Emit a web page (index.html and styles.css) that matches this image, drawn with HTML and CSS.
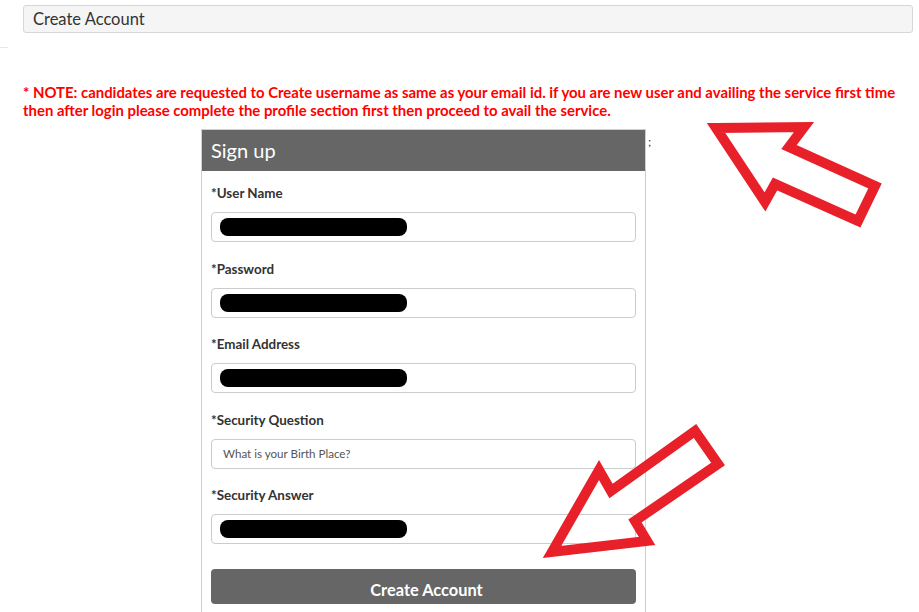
FILE: index.html
```html
<!DOCTYPE html>
<html lang="en">
<head>
<meta charset="utf-8">
<title>Create Account</title>
<link rel="stylesheet" href="styles.css">
</head>
<body>
<div class="page">
  <div class="titlebar">Create Account</div>
  <div class="rule"></div>
  <p class="note">* NOTE: candidates are requested to Create username as same as your email id. if you are new user and availing the service first time then after login please complete the profile section first then proceed to avail the service.</p>
  <div class="row">
    <div class="panel">
      <div class="panel-head">Sign up</div>
      <div class="panel-body">
        <div class="group">
          <div class="label">*User Name</div>
          <div class="input"><span class="redact"></span></div>
        </div>
        <div class="group">
          <div class="label">*Password</div>
          <div class="input"><span class="redact"></span></div>
        </div>
        <div class="group">
          <div class="label">*Email Address</div>
          <div class="input"><span class="redact"></span></div>
        </div>
        <div class="group">
          <div class="label">*Security Question</div>
          <div class="input select">What is your Birth Place?</div>
        </div>
        <div class="group last">
          <div class="label">*Security Answer</div>
          <div class="input"><span class="redact"></span></div>
        </div>
        <div class="button">Create Account</div>
      </div>
    </div>
    <span class="semi">;</span>
  </div>
  <svg class="annot" width="919" height="612" viewBox="0 0 919 612">
    <polygon points="716,128 804,127 789,147 875,186 858,221 775,184 765,202" fill="none" stroke="#e8202a" stroke-width="10" stroke-linejoin="miter" stroke-miterlimit="10"/>
    <polygon points="552,552 599,470 611,491 695,431 718,464 635,521 647,541" fill="none" stroke="#e8202a" stroke-width="10" stroke-linejoin="miter" stroke-miterlimit="10"/>
  </svg>
</div>
</body>
</html>
```
FILE: styles.css
```css
html, body {
  margin: 0;
  padding: 0;
  background: #fff;
}
.page {
  position: relative;
  width: 919px;
  height: 612px;
  overflow: hidden;
  font-family: Lato, "Liberation Sans", sans-serif;
  color: #333;
}
.titlebar {
  margin: 5px 6px 0 23px;
  height: 26px;
  line-height: 26px;
  padding-left: 9px;
  background: #f5f5f5;
  border: 1px solid #d6d6d6;
  border-radius: 3px;
  font-size: 16.5px;
  color: #333;
}
.rule {
  width: 8px;
  height: 1px;
  background: #e6e6e6;
  margin-top: 14px;
}
.note {
  margin: 35px 10px 0 23px;
  font-size: 14.9px;
  line-height: 18px;
  font-weight: bold;
  color: #ff0000;
}
.row {
  display: flex;
  align-items: flex-start;
  margin-top: 10px;
  margin-left: 201px;
}
.panel {
  width: 443px;
  border: 1px solid #cfcfcf;
  border-bottom: none;
  height: 490px;
}
.panel-head {
  height: 41px;
  line-height: 41px;
  background: #666;
  color: #fff;
  font-size: 20px;
  padding-left: 9px;
}
.panel-body {
  padding: 13px 8px 0 9px;
}
.group {
  margin-bottom: 17.5px;
}
.group.last {
  margin-bottom: 25px;
}
.label {
  font-size: 13.4px;
  font-weight: bold;
  line-height: 18px;
  margin-bottom: 10px;
  color: #333;
}
.input {
  box-sizing: border-box;
  height: 30px;
  width: 425px;
  border: 1px solid #ccc;
  border-radius: 4px;
  padding: 5px 0 0 8px;
  background: #fff;
}
.redact {
  display: block;
  width: 187px;
  height: 18px;
  background: #000;
  border-radius: 8px;
}
.input.select {
  padding: 0 0 0 11px;
  line-height: 28px;
  font-size: 11.6px;
  color: #555;
}
.button {
  box-sizing: border-box;
  width: 425px;
  height: 35px;
  padding: 6px 0 0 6px;
  line-height: 29px;
  background: #666;
  border-radius: 4px;
  color: #fff;
  font-size: 16.4px;
  font-weight: bold;
  text-align: center;
}
.semi {
  font-size: 12px;
  color: #333;
  margin: 5px 0 0 2px;
}
.annot {
  position: absolute;
  left: 0;
  top: 0;
  pointer-events: none;
}
```
